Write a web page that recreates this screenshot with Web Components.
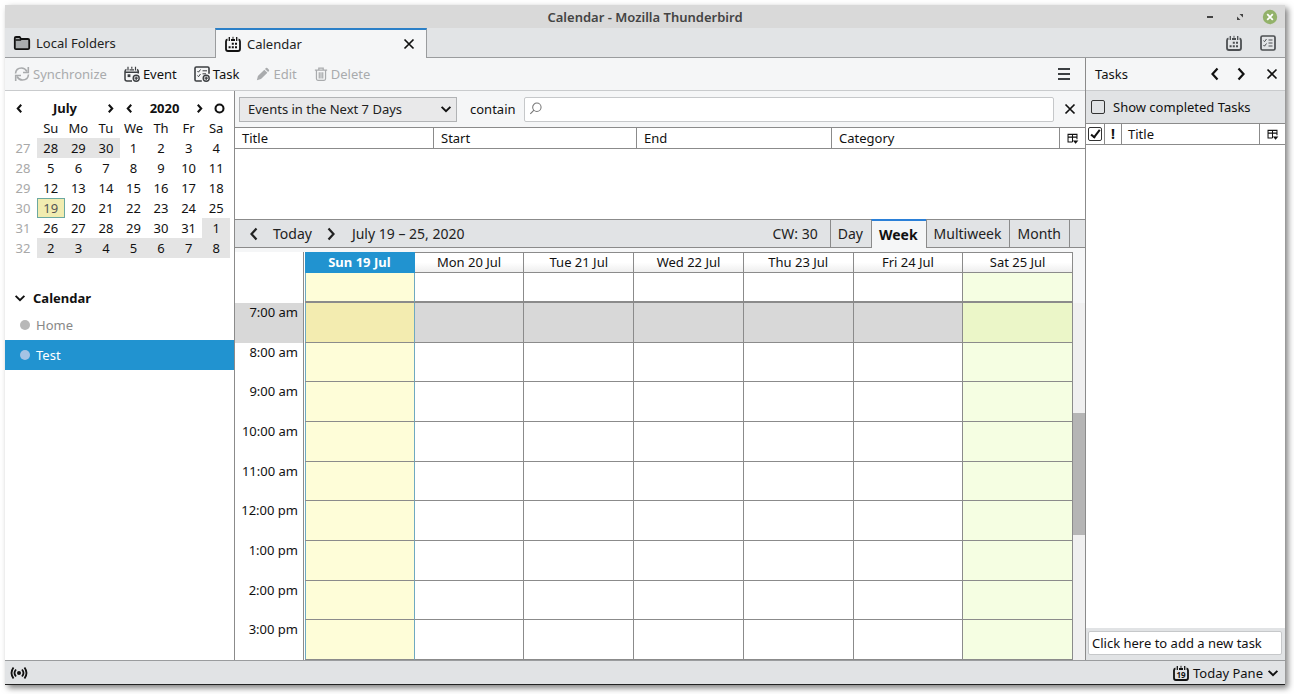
<!DOCTYPE html>
<html lang="en">
<head>
<meta charset="utf-8">
<title>Calendar - Mozilla Thunderbird</title>
<style>
  body { margin: 0; background: #fff; font: 13px/20px "Noto Sans", "Open Sans", sans-serif; color: #111; }
</style>
</head>
<body>
<app-window></app-window>
<script>
const base = `
  *, *::before, *::after { box-sizing: border-box; }
  button { font: inherit; color: inherit; background: none; border: 0; padding: 0; margin: 0; display: inline-flex; align-items: center; justify-content: center; white-space: nowrap; }
  table { border-spacing: 0; border-collapse: separate; }
  th, td { padding: 0; font-weight: inherit; }
`;
const define = (name, css, html) => customElements.define(name, class extends HTMLElement {
  constructor() {
    super();
    this.attachShadow({ mode: 'open' }).innerHTML = `<style>${base}${css}</style>${html}`;
  }
});

const CAL = '<path d="M2.500 3.500Q1 3.800 1 5.500V13q0 2 2 2h10q2 0 2-2V5.500q0-1.700-1.500-2" fill="none" stroke="currentColor" stroke-width="1.800"/><path d="M6 4h4" stroke="currentColor" stroke-width="2"/><path d="M4.300 1v4M11.700 1v4" stroke="currentColor" stroke-width="1.300"/><path d="M8 .8v2" stroke="currentColor"/>';
const PLUS = '<circle cx="12.200" cy="12.200" r="3" fill="none" stroke="currentColor" stroke-width="1.400"/><path d="M12.200 10.500v3.400M10.500 12.200h3.400" stroke="currentColor" stroke-width="1.200"/>';
const ICONS = {
  folder: '<path d="M.8 13V3Q.8 2 2 2h3.600l1.500 2h6.900q1.200 0 1.200 1.200V13q0 1.200-1.200 1.200H2Q.8 14.200.8 13z" fill="#a9acae" stroke="currentColor" stroke-width="1.800"/><path d="M1.500 5h5L7.500 4" fill="none" stroke="currentColor" stroke-width="1.400"/>',
  calendar: CAL + '<path d="M6.800 6.800h2v2h-2zM10 6.800h2v2h-2zM3.600 10.200h2v2h-2zM6.800 10.200h2v2h-2zM10 10.200h2v2h-2z" fill="currentColor"/>',
  event: '<path d="M8 15H3q-2 0-2-2V5.500Q1 3.800 2.500 3.500M13 3.500q1.300.4 1.300 2V7.500M1 6.200h13" fill="none" stroke="currentColor" stroke-width="1.500"/><path d="M5.500 3.800h4.500M4 .8v3.800M11.500.8v3.800M7.800.8v2" stroke="currentColor" stroke-width="1.200"/><path d="M3.600 8.300h2.800v2.800H3.600z" fill="currentColor"/>' + PLUS,
  task: '<path d="M7.800 15H2.300Q1 15 1 13.700V2.300Q1 1 2.300 1h11.400Q15 1 15 2.300V7.800" fill="none" stroke="currentColor" stroke-width="1.600"/><path d="M3.500 5l1 1.200L6.500 3.500M3.500 9.500l1 1.200L6.500 8M8.500 4.800H13M8.500 7.800H12" fill="none" stroke="currentColor"/>' + PLUS,
  tasks: '<rect x="1" y="1" width="14" height="14" rx="1.500" fill="none" stroke="currentColor" stroke-width="1.700"/><path d="M3.500 5.500l1 1.200L6.500 4M3.500 10l1 1.200L6.500 8.500M8.500 5h4M8.500 8h4M8.500 11h4" fill="none" stroke="currentColor"/>',
  sync: '<path d="M1.500 7.500Q2 2 7.500 2q3.500 0 5.500 3.500M14.500 8.500Q14 14 8.500 14 5 14 3 10.500" fill="none" stroke="currentColor" stroke-width="1.600"/><path d="M14.300 1v5.500H9M1.700 15V9.500H7" fill="none" stroke="currentColor" stroke-width="1.600"/>',
  edit: '<path d="M1 15l1.200-4.700 7.300-7.300 3.500 3.500-7.300 7.300zM10.300 2.200l1-1q.8-.6 1.600 0l1.900 1.900q.6.800 0 1.600l-1 1z" fill="currentColor"/>',
  trash: '<path d="M1 3.500h14M5.500 3V1.200h5V3M2.800 4v9.500q0 1.700 1.700 1.700h7q1.700 0 1.700-1.700V4M6 6v7M8 6v7M10 6v7" fill="none" stroke="currentColor" stroke-width="1.400"/>',
  menu: '<path d="M2 3h12M2 8h12M2 13h12" stroke="currentColor" stroke-width="2"/>',
  close: '<path d="M3.500 3.500l9 9M12.500 3.500l-9 9" stroke="currentColor" stroke-width="1.700"/>',
  left: '<path d="M10.500 2.500L5.500 8l5 5.500" fill="none" stroke="currentColor" stroke-width="2.200"/>',
  right: '<path d="M5.500 2.500l5 5.500-5 5.500" fill="none" stroke="currentColor" stroke-width="2.200"/>',
  down: '<path d="M3 5.500l5 5 5-5" fill="none" stroke="currentColor" stroke-width="2.200"/>',
  ring: '<circle cx="8" cy="8" r="5.800" fill="none" stroke="currentColor" stroke-width="3"/>',
  search: '<circle cx="9" cy="6" r="4.800" fill="none" stroke="currentColor" stroke-width="1.200"/><path d="M5.700 9.300l-4.200 4.200" stroke="currentColor" stroke-width="1.300"/>',
  picker: '<path d="M8 13H1.500V2h13v7M1.500 6h13M8 2v11" fill="none" stroke="currentColor" stroke-width="1.500"/><path d="M8.500 11h8l-4 4.500z" fill="currentColor"/>',
  signal: '<circle cx="8" cy="8" r="2" fill="currentColor"/><path d="M5 4.500q-3 3.500 0 7M11 4.500q3 3.500 0 7M2.500 2.500q-4 5.500 0 11M13.500 2.500q4 5.500 0 11" fill="none" stroke="currentColor" stroke-width="1.800"/>',
  today: CAL + '<text x="8" y="12.500" text-anchor="middle" font-size="8" font-weight="700" font-family="Noto Sans, sans-serif" fill="currentColor">19</text>',
  minimize: '<path d="M5 8h6" stroke="currentColor" stroke-width="2"/>',
  restore: '<path d="M7.500 5H11v3.500zM5 7.500V11h3.500z" fill="currentColor"/>',
  'window-close': '<circle cx="8" cy="8" r="7.200" fill="#93b26a"/><path d="M5.200 5.200l5.600 5.600M10.800 5.200l-5.600 5.600" stroke="#fff" stroke-width="1.800"/>'
};
customElements.define('x-icon', class extends HTMLElement {
  connectedCallback() {
    if (this.shadowRoot) return;
    this.attachShadow({ mode: 'open' }).innerHTML = `<style>
      :host { display: inline-block; width: 16px; height: 16px; flex: none; }
      :host([small]) { width: 11px; height: 11px; }
      :host([small][name=left]) path, :host([small][name=right]) path { stroke-width: 3; }
      :host([medium]) { width: 14px; height: 14px; }
      svg { display: block; width: 100%; height: 100%; overflow: visible; }
    </style><svg viewBox="0 0 16 16" aria-hidden="true">${ICONS[this.getAttribute('name')]}</svg>`;
  }
});

define('title-bar', `
  :host { display: grid; grid-template-columns: 1fr auto 1fr; align-items: center; height: 23px; background: #d9d9d9; color: #444; font-weight: 600; }
  h1 { grid-column: 2; margin: 0; font: inherit; }
  div { display: flex; justify-content: flex-end; gap: 14px; padding-right: 7px; }
`, `<h1>Calendar - Mozilla Thunderbird</h1>
  <div><button aria-label="Minimize"><x-icon name="minimize"></x-icon></button><button aria-label="Restore"><x-icon name="restore"></x-icon></button><button aria-label="Close"><x-icon name="window-close"></x-icon></button></div>`);

define('tab-bar', `
  :host { display: flex; height: 30px; background: #e2e4e6; color: #222; }
  .tab { display: flex; align-items: center; gap: 6px; width: 210px; padding: 0 9px; border-bottom: 1px solid #9a9c9e; justify-content: flex-start; }
  .tab.on { width: 212px; background: #f5f6f7; border: 1px solid #9a9c9e; border-top: 2px solid #2b80c8; border-bottom: 0; }
  .tab.on button:first-child { gap: 6px; flex: 1; justify-content: flex-start; }
  x-icon { color: #111; }
  .end { flex: 1; display: flex; justify-content: flex-end; align-items: center; gap: 18px; padding-right: 9px; border-bottom: 1px solid #9a9c9e; }
  .end x-icon { color: #4c4f52; }
`, `<button class="tab"><x-icon name="folder"></x-icon>Local Folders</button>
  <div class="tab on"><button><x-icon name="calendar"></x-icon>Calendar</button><button aria-label="Close tab"><x-icon name="close"></x-icon></button></div>
  <div class="end"><button aria-label="Calendar"><x-icon name="calendar"></x-icon></button><button aria-label="Tasks"><x-icon name="tasks"></x-icon></button></div>`);

define('tool-bar', `
  :host { display: flex; align-items: center; gap: 17px; height: 33px; padding: 0 13px 0 9px; background: #f5f6f7; border-bottom: 1px solid #c9cbcd; }
  button { gap: 3px; }
  button:disabled { color: #a9abad; }
  x-icon { color: #3c3f42; }
  :disabled x-icon { color: inherit; }
  .menu { margin-left: auto; }
`, `<button disabled><x-icon name="sync"></x-icon>Synchronize</button><button><x-icon name="event"></x-icon>Event</button><button><x-icon name="task"></x-icon>Task</button><button disabled><x-icon medium name="edit"></x-icon>Edit</button><button disabled><x-icon medium name="trash"></x-icon>Delete</button><button class="menu" aria-label="Menu"><x-icon name="menu"></x-icon></button>`);

const weeks = [[27,28,29,30,1,2,3,4],[28,5,6,7,8,9,10,11],[29,12,13,14,15,16,17,18],[30,19,20,21,22,23,24,25],[31,26,27,28,29,30,31,1],[32,2,3,4,5,6,7,8]];
const monthCell = (d, w, i) => {
  const out = (w === 0 && i < 4) || (w === 4 && i === 7) || w === 5;
  return `<td class="${out ? 'out' : w === 3 && i === 1 ? 'today' : ''}">${d}</td>`;
};
define('mini-month', `
  :host { display: block; padding: 7px 4px 0; }
  nav { display: grid; grid-template-columns: 20px 72fr 18px 20px 51fr 18px 22px; height: 20px; font-weight: 700; }
  nav span { text-align: center; }
  table { width: 100%; table-layout: fixed; text-align: center; }
  tr { height: 20px; }
  th:first-child { width: 28px; color: #a8a8a8; }
  .out { background: #e4e4e4; }
  .today { background: #f1ecb0; box-shadow: inset 0 0 0 1px #6ba8a0; color: #555; }
`, `<nav><button aria-label="Previous month"><x-icon small name="left"></x-icon></button><span>July</span><button aria-label="Next month"><x-icon small name="right"></x-icon></button><button aria-label="Previous year"><x-icon small name="left"></x-icon></button><span>2020</span><button aria-label="Next year"><x-icon small name="right"></x-icon></button><button aria-label="Today"><x-icon small name="ring"></x-icon></button></nav>
  <table><tr><th></th>${['Su','Mo','Tu','We','Th','Fr','Sa'].map(d => `<th>${d}</th>`).join('')}</tr>
  ${weeks.map((r, w) => `<tr><th>${r[0]}</th>${r.slice(1).map((d, i) => monthCell(d, w, i + 1)).join('')}</tr>`).join('')}</table>`);

define('calendar-list', `
  :host { display: block; margin-top: 28px; }
  h2 { margin: 0; font: inherit; }
  h2 button { gap: 6px; height: 24px; padding-left: 8px; font-weight: 700; }
  ul { margin: 0; padding: 0; list-style: none; }
  li { display: flex; align-items: center; gap: 6px; height: 30px; padding-left: 15px; color: #888; }
  li::before { content: ""; width: 10px; height: 10px; border-radius: 50%; background: #b8b8b8; }
  li[aria-selected] { background: #2193d0; color: #fff; }
  li[aria-selected]::before { background: #a5c3e4; }
`, `<h2><button><x-icon medium name="down"></x-icon>Calendar</button></h2><ul role="listbox" aria-label="Calendars"><li role="option">Home</li><li role="option" aria-selected="true">Test</li></ul>`);

define('event-filter', `
  :host { display: flex; align-items: center; height: 36px; padding: 0 7px 0 4px; background: #f5f6f7; }
  .pick { display: grid; align-items: center; width: 218px; }
  .pick > * { grid-area: 1 / 1; }
  .pick x-icon { justify-self: end; margin-right: 4px; pointer-events: none; }
  select { appearance: none; width: 100%; height: 25px; padding: 0 8px; font: inherit; color: #222; background: #e9e9ea; border: 1px solid #b1b3b5; border-radius: 0; }
  label { margin: 0 8px 0 13px; }
  .box { flex: 1; display: flex; align-items: center; gap: 4px; height: 25px; padding: 0 4px; background: #fff; border: 1px solid #c6c8ca; border-radius: 2px; color: #777; }
  input { flex: 1; min-width: 0; border: 0; outline: 0; padding: 0; font: inherit; background: none; }
  .x { margin-left: 8px; }
`, `<div class="pick"><select aria-label="Event range"><option>Events in the Next 7 Days</option></select><x-icon medium name="down"></x-icon></div>
  <label for="q">contain</label><div class="box"><x-icon medium name="search"></x-icon><input id="q" type="text"></div><button class="x" aria-label="Close"><x-icon name="close"></x-icon></button>`);

define('event-list', `
  :host { display: block; height: 92px; background: #fff; }
  table, thead { display: block; }
  tr { display: grid; grid-template-columns: 198fr 203fr 195fr 228fr 26px; height: 22px; border: solid #8b8b8b; border-width: 1px 0; }
  th { display: flex; align-items: center; padding: 0 7px; border-left: 1px solid #8b8b8b; }
  th:first-child { border-left: 0; }
  th:last-child { justify-content: center; }
`, `<table><thead><tr><th>Title</th><th>Start</th><th>End</th><th>Category</th><th><button aria-label="Choose columns"><x-icon small name="picker"></x-icon></button></th></tr></thead></table>`);

define('view-nav', `
  :host { display: flex; align-items: center; height: 29px; border: solid #8b8b8b; border-width: 1px 0; background: #e1e3e5; color: #222; font-size: 14px; }
  .go { width: 38px; }
  .cw { margin: 0 12px 0 auto; }
  .date { margin-left: 2px; }
  nav { display: flex; align-self: stretch; margin-bottom: -1px; padding-right: 15px; }
  nav button { padding: 0 8px 0 7px; border: solid #8b8b8b; border-width: 0 0 1px 1px; }
  nav button:last-child { border-right-width: 1px; }
  nav .on { font-weight: 700; background: #f5f6f7; border-top: 2px solid #2b80d8; border-bottom: 0; margin-top: -1px; color: #111; }
`, `<button class="go" aria-label="Previous week"><x-icon name="left"></x-icon></button><button>Today</button><button class="go" aria-label="Next week"><x-icon name="right"></x-icon></button><span class="date">July 19 – 25, 2020</span><span class="cw">CW: 30</span>
  <nav><button>Day</button><button class="on" aria-current="true">Week</button><button>Multiweek</button><button>Month</button></nav>`);

const days = ['Sun 19 Jul','Mon 20 Jul','Tue 21 Jul','Wed 22 Jul','Thu 23 Jul','Fri 24 Jul','Sat 25 Jul'];
const hours = ['7:00 am','8:00 am','9:00 am','10:00 am','11:00 am','12:00 pm','1:00 pm','2:00 pm','3:00 pm'];
const kind = i => i === 0 ? 'sun' : i === 6 ? 'sat' : '';
define('week-view', `
  :host { flex: 1; display: flex; padding-top: 4px; background: #f5f6f7; line-height: 18px; }
  table { flex: 1; display: flex; flex-direction: column; background: #fff; }
  thead { display: block; }
  tbody { flex: 1; display: flex; flex-direction: column; }
  tr { display: grid; grid-template-columns: 70px repeat(7, minmax(0, 1fr)); }
  tbody tr { flex: 1; min-height: 39px; }
  th:first-child { border-right: 1px solid #8b8b8b; margin-right: 1px; text-align: right; padding-right: 5px; }
  td, .head th + th { border-right: 1px solid #8b8b8b; }
  td { border-bottom: 1px solid #8b8b8b; }
  .head th + th { height: 21px; border-top: 1px solid #8b8b8b; border-bottom: 1px solid #8b8b8b; text-align: center; background: linear-gradient(#fff 50%, #eee); }
  .head th.sun:nth-child(2) { background: #2193d0; color: #fff; font-weight: 700; border-color: #2193d0; }
  .allday > * { height: 30px; }
  .allday td { border-bottom-width: 2px; }
  td.sun { background: #fefdd8; border-right-color: #6fa9c0; box-shadow: inset 1px 0 #6fa9c0; }
  td.sat { background: #f5fee2; }
  .off td, .off th { background: #d8d8d8; }
  .off td.sun { background: #f3ecb0; }
  .off td.sat { background: #ebf6c8; }
  .bar { width: 12px; display: flex; flex-direction: column; margin-top: 51px; background: #f0f0f0; }
  .bar::before { content: ""; flex: 110; }
  .bar::after { content: ""; flex: 125; }
  .thumb { flex: 122; background: #b5b5b5; }
`, `<table><thead><tr class="head"><th></th>${days.map((d, i) => `<th class="${kind(i)}">${d}</th>`).join('')}</tr>
  <tr class="allday"><th></th>${days.map((d, i) => `<td class="${kind(i)}"></td>`).join('')}</tr></thead>
  <tbody>${hours.map((h, r) => `<tr class="${r ? '' : 'off'}"><th>${h}</th>${days.map((d, i) => `<td class="${kind(i)}"></td>`).join('')}</tr>`).join('')}</tbody></table>
  <div class="bar"><div class="thumb"></div></div>`);

define('task-pane', `
  :host { display: flex; flex-direction: column; border-left: 1px solid #8b8b8b; background: #fff; }
  header { display: flex; align-items: center; gap: 10px; height: 33px; padding: 0 5px 0 9px; background: #f5f6f7; border-bottom: 1px solid #c9cbcd; }
  h2 { flex: 1; margin: 0; font: inherit; }
  header button:last-child { margin-left: 5px; }
  label { display: flex; align-items: center; gap: 8px; height: 32px; padding-left: 5px; background: #e1e3e5; }
  input[type=checkbox] { appearance: none; width: 14px; height: 14px; margin: 0; border: 1px solid #333; border-radius: 2px; display: grid; place-items: center; }
  input:checked::before { content: ""; width: 5px; height: 10px; border: solid #111; border-width: 0 2px 2px 0; transform: rotate(38deg); margin-bottom: 2px; }
  table, thead { display: block; }
  tr { display: grid; grid-template-columns: 18px 17px 1fr 26px; height: 22px; border: solid #8b8b8b; border-width: 1px 0; }
  th { display: flex; align-items: center; justify-content: center; border-left: 1px solid #8b8b8b; }
  th:first-child { border-left: 0; }
  th b { font-size: 14px; }
  th.title { justify-content: flex-start; padding-left: 6px; }
  footer { margin-top: auto; height: 32px; padding: 3px 3px 5px 2px; background: #e1e3e5; }
  footer input { display: block; width: 100%; height: 24px; padding: 0 3px; font: inherit; background: #fff; border: 1px solid #c6c8ca; border-radius: 2px; }
  footer input::placeholder { color: #111; opacity: 1; }
`, `<header><h2>Tasks</h2><button aria-label="Previous"><x-icon name="left"></x-icon></button><button aria-label="Next"><x-icon name="right"></x-icon></button><button aria-label="Close"><x-icon name="close"></x-icon></button></header>
  <label><input type="checkbox">Show completed Tasks</label>
  <table><thead><tr><th><input type="checkbox" checked aria-label="Completed"></th><th><b>!</b></th><th class="title">Title</th><th><button aria-label="Choose columns"><x-icon small name="picker"></x-icon></button></th></tr></thead></table>
  <footer><input type="text" aria-label="New task" placeholder="Click here to add a new task"></footer>`);

define('status-bar', `
  :host { display: flex; align-items: center; justify-content: space-between; height: 25px; padding: 0 5px 0 6px; background: #e1e3e5; border-top: 1px solid #9a9c9e; border-bottom: 1px solid #222; }
  button { gap: 4px; }
  button x-icon[medium] { margin-left: -1px; }
`, `<button aria-label="Online"><x-icon name="signal"></x-icon></button><button><x-icon name="today"></x-icon>Today Pane<x-icon medium name="down"></x-icon></button>`);

define('app-window', `
  :host { display: flex; flex-direction: column; min-height: calc(100vh - 14px); margin: 5px 9px 9px 5px; background: #fff; box-shadow: 3px 3px 6px rgba(0,0,0,.5); }
  main { flex: 1; display: grid; grid-template-columns: minmax(0, 1fr) 200px; grid-template-rows: 100%; }
  .work, .center { display: flex; flex-direction: column; }
  .split { flex: 1; display: grid; grid-template-columns: 229px minmax(0, 1fr); }
  .center { border-left: 1px solid #8b8b8b; }
`, `<title-bar></title-bar><tab-bar></tab-bar>
  <main><div class="work"><tool-bar></tool-bar><div class="split"><aside><mini-month></mini-month><calendar-list></calendar-list></aside>
  <section class="center"><event-filter></event-filter><event-list></event-list><view-nav></view-nav><week-view></week-view></section></div></div><task-pane></task-pane></main>
  <status-bar></status-bar>`);
</script>
</body>
</html>
